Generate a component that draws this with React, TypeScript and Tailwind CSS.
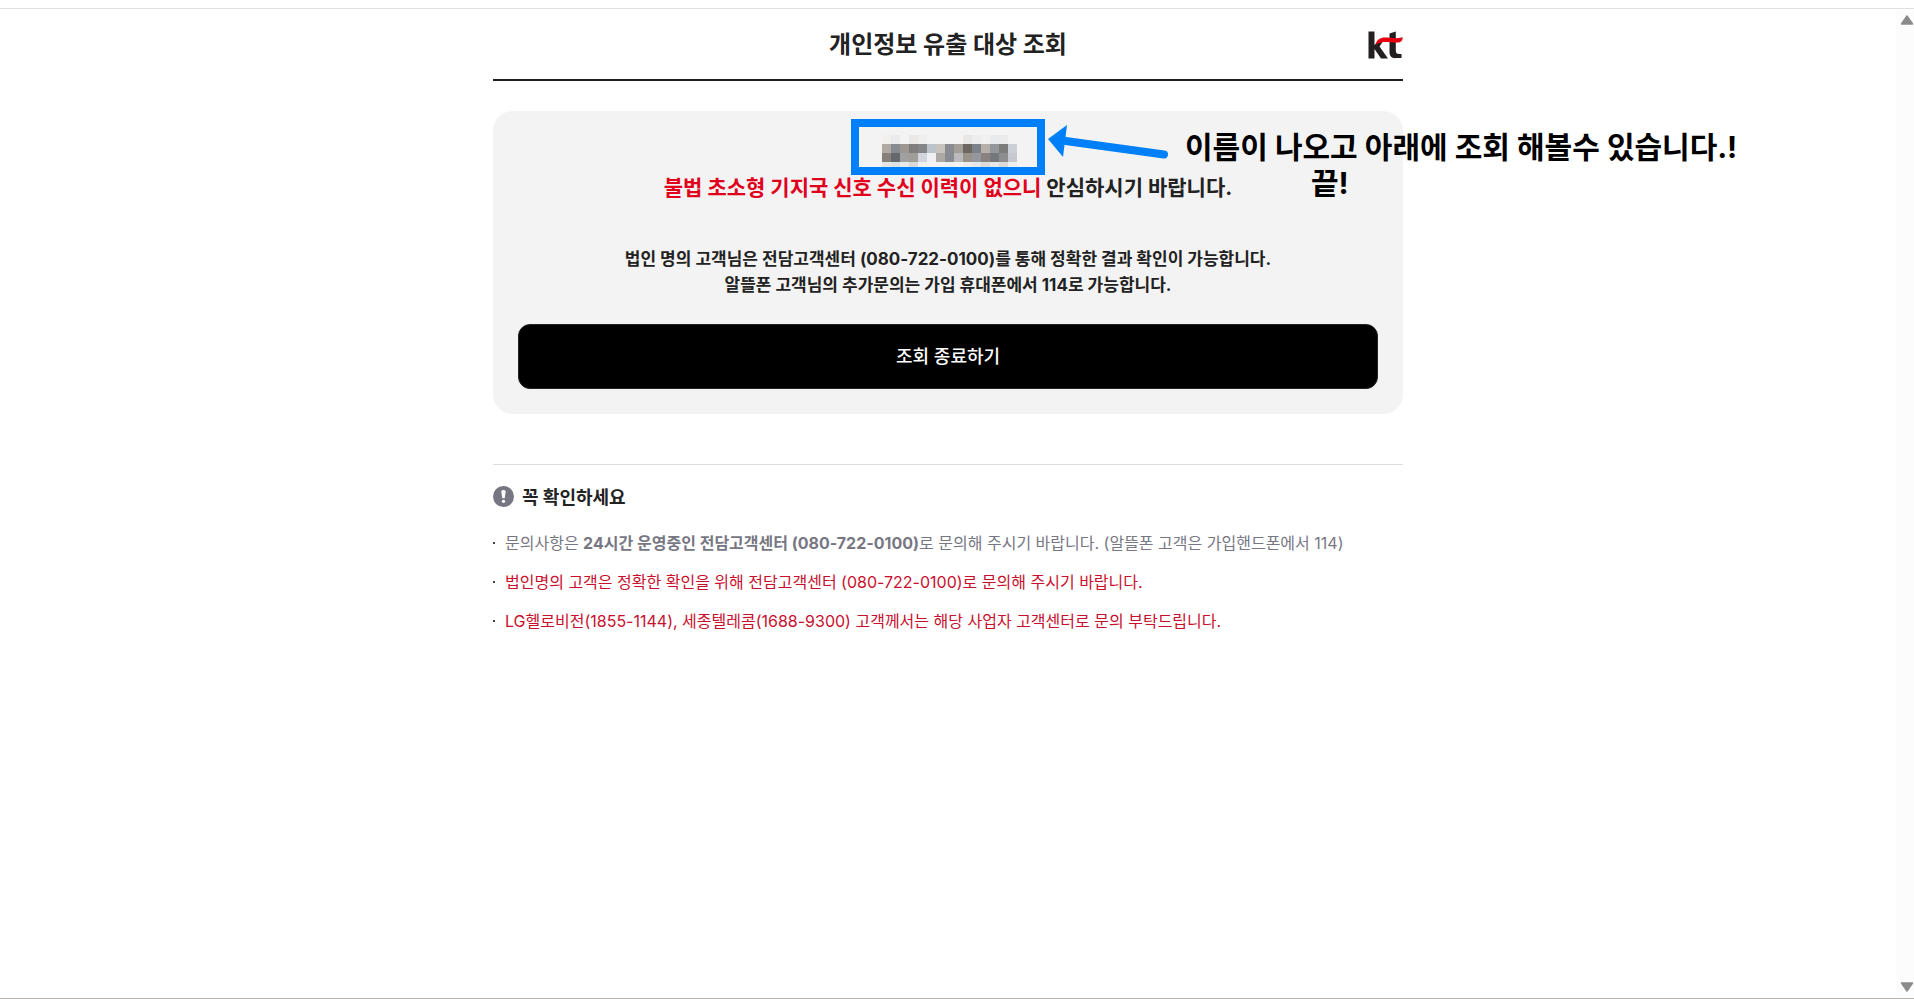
import type { ReactNode } from "react";

const MOSAIC = [
    ["#f1f0ef", "#e9eaeb", "#f3f3f3", "#ebe9e8", "#eeeeef", "#f3f3f3", "#f3f3f3", "#f3f3f3", "#f3f3f3", "#e8e7e6", "#ededee", "#f0f0f0", "#e9eaeb", "#ebebeb", "#f3f3f3"],
    ["#b2aaa2", "#858b90", "#9d9793", "#807e7c", "#858588", "#bcc4cb", "#c8c3bf", "#888c90", "#a39e98", "#6d6660", "#7c8289", "#b7afaa", "#93969b", "#7c7d7b", "#cbd0d6"],
    ["#85807a", "#66696c", "#a0a0a1", "#a39d98", "#d2d5de", "#eef0f4", "#aca8a2", "#888c92", "#bbbbbb", "#98928a", "#94989c", "#888380", "#74777c", "#8b8d8e", "#c5c9cf"],
    ["#e6e6e6", "#e0e1e2", "#eaeaea", "#dadada", "#f1f1f1", "#f3f3f3", "#f3f3f3", "#f0f0f0", "#f2f2f2", "#ededed", "#e5e7e8", "#dbdbda", "#e6e6e7", "#dadada", "#eeeeef"],
];

const NOTICES: { id: number; red: boolean; text: ReactNode }[] = [
    {
        id: 1,
        red: false,
        text: (
            <>
                문의사항은 <strong className="font-bold">24시간 운영중인 전담고객센터 (080-722-0100)</strong>로 문의해 주시기 바랍니다. (알뜰폰 고객은 가입핸드폰에서 114)
            </>
        ),
    },
    { id: 2, red: true, text: "법인명의 고객은 정확한 확인을 위해 전담고객센터 (080-722-0100)로 문의해 주시기 바랍니다." },
    { id: 3, red: true, text: "LG헬로비전(1855-1144), 세종텔레콤(1688-9300) 고객께서는 해당 사업자 고객센터로 문의 부탁드립니다." },
];

function KtLogo() {
    return (
        <svg width="35" height="28" viewBox="0 0 35 28" role="img" aria-label="kt">
            <path fill="#231f20" d="M0.5 0.5H6.5V14L9.5 11H14.5L11.5 15.5L20 27.5H13L6.5 18V27.5H0.5Z" />
            <path fill="#231f20" d="M21.5 2.5L27.8 0.5V19.5C27.8 22.3 29 23 31 23H33.5V27H29C24 27.8 21.5 25.5 21.5 21Z" />
            <path fill="#e60012" d="M7.5 13.5C9 8.5 12 6.5 17 6.5C22 6.5 28 8.2 34.6 6.2C34.8 9.5 33 11.6 29 11.6C24 11.8 18 10.4 14 11.3C11.5 11.9 9.5 12.6 7.5 13.5Z" />
        </svg>
    );
}

function MaskedName() {
    return (
        <svg width="135" height="32" viewBox="0 0 135 32" shapeRendering="crispEdges" aria-hidden="true">
            {MOSAIC.map((row, y) =>
                row.map((color, x) => <rect key={`${x}-${y}`} x={x * 9} y={y * 9} width="9" height="9" fill={color} />)
            )}
        </svg>
    );
}

function Scrollbar() {
    return (
        <div className="flex w-[18px] shrink-0 flex-col items-end justify-between bg-[#fcfcfc] pt-1.5 pb-1.5" aria-hidden="true">
            <svg width="14" height="10" viewBox="0 0 14 10">
                <path d="M7 1L12.5 9H1.5Z" fill="#8b8b8b" stroke="#8b8b8b" strokeWidth="1.5" strokeLinejoin="round" />
            </svg>
            <svg width="14" height="10" viewBox="0 0 14 10">
                <path d="M7 9L12.5 1H1.5Z" fill="#8b8b8b" stroke="#8b8b8b" strokeWidth="1.5" strokeLinejoin="round" />
            </svg>
        </div>
    );
}

export default function App() {
    return (
        <div className="flex min-h-screen flex-col border-b border-[#b5b1ae] bg-white pt-2 font-['Inter','Noto_Sans_CJK_KR',sans-serif] text-[#222]">
            <div className="flex grow border-t border-[#e0e0e0]">
                <div className="min-w-0 grow">
                    <div className="mx-auto w-full max-w-[910px]">
                        <header className="grid h-[72px] grid-cols-[1fr_auto_1fr] items-center border-b-2 border-[#231f20] pt-0.5">
                            <h1 className="col-start-2 text-2xl leading-8 font-bold">개인정보 유출 대상 조회</h1>
                            <a href="#" className="justify-self-end">
                                <KtLogo />
                            </a>
                        </header>

                        <main>
                            <section className="mt-[30px] flex flex-col items-center rounded-[20px] bg-[#f3f3f3] px-[25px] pt-2 pb-[25px] text-center">
                                <div className="relative h-14 w-[194px] border-8 border-[#0080f8] pt-2 pl-[23px]">
                                    <MaskedName />
                                    {/* callout */}
                                    <div className="absolute -top-2 left-[189px] flex">
                                        <svg width="121" height="44" viewBox="0 0 121 44" className="shrink-0" aria-hidden="true">
                                            <path d="M0 20L19 6L15 38Z" fill="#0080f8" />
                                            <path d="M14 21.5L116 35.5" stroke="#0080f8" strokeWidth="8" strokeLinecap="round" />
                                        </svg>
                                        <p className="pt-2.5 pl-4 text-left text-3xl leading-9 font-bold whitespace-nowrap text-black">
                                            이름이 나오고 아래에 조회 해볼수 있습니다.!
                                            <span className="block pl-[126px]">끝!</span>
                                        </p>
                                    </div>
                                </div>
                                <p className="text-[21px] leading-[26px] font-bold">
                                    <span className="text-[#e0001b]">불법 초소형 기지국 신호 수신 이력이 없으니</span> 안심하시기 바랍니다.
                                </p>
                                <p className="mt-[45px] text-[17px] leading-[26px] font-bold">
                                    법인 명의 고객님은 전담고객센터 (080-722-0100)를 통해 정확한 결과 확인이 가능합니다.
                                    <br />
                                    알뜰폰 고객님의 추가문의는 가입 휴대폰에서 114로 가능합니다.
                                </p>
                                <button type="button" className="mt-[26px] h-[65px] w-full rounded-xl border border-[#222] bg-black text-[18px] font-medium text-white">
                                    조회 종료하기
                                </button>
                            </section>

                            <section className="mt-[50px] border-t border-[#dcdcdc] pt-5">
                                <h2 className="flex items-start gap-2 text-[18px] leading-[26px] font-bold">
                                    <svg width="21" height="21" viewBox="0 0 21 21" className="mt-px" aria-hidden="true">
                                        <circle cx="10.5" cy="10.5" r="10.5" fill="#777783" />
                                        <path d="M8.3 5.6C8.3 3.3 12.7 3.3 12.7 5.6L11.7 12.2H9.3Z" fill="#fff" />
                                        <circle cx="10.5" cy="15.3" r="1.6" fill="#fff" />
                                    </svg>
                                    꼭 확인하세요
                                </h2>
                                <ul className="mt-[19px] flex flex-col gap-[13px] text-[16px] leading-[26px]">
                                    {NOTICES.map((notice) => (
                                        <li key={notice.id} className="flex items-center gap-2.5">
                                            <span className="size-0.5 shrink-0 bg-[#444]" />
                                            <span className={notice.red ? "text-[#c8102e]" : "text-[#777783]"}>{notice.text}</span>
                                        </li>
                                    ))}
                                </ul>
                            </section>
                        </main>
                    </div>
                </div>
                <Scrollbar />
            </div>
        </div>
    );
}
